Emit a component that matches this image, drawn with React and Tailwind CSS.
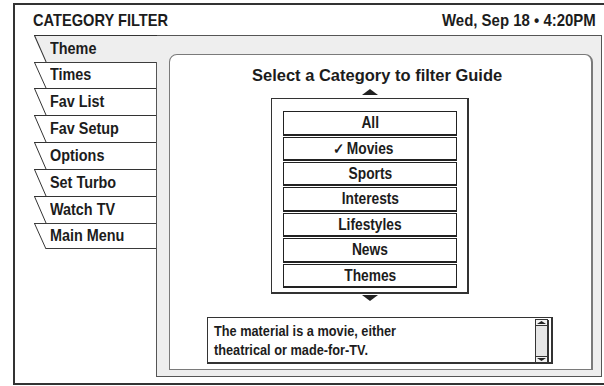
import React from "react";

const font = "font-['Liberation_Sans','Arial',sans-serif]";

const tabs = [
  { label: "Times", h: "h-[26px]" },
  { label: "Fav List", h: "h-[27px]" },
  { label: "Fav Setup", h: "h-[27px]" },
  { label: "Options", h: "h-[27px]" },
  { label: "Set Turbo", h: "h-[27px]" },
  { label: "Watch TV", h: "h-[27px]" },
  { label: "Main Menu", h: "h-[26px]", last: true },
];

const categories = [
  { label: "All", h: "h-[25px]" },
  { label: "Movies", h: "h-[24px]", checked: true },
  { label: "Sports", h: "h-[24px]" },
  { label: "Interests", h: "h-[25px]" },
  { label: "Lifestyles", h: "h-[24px]" },
  { label: "News", h: "h-[25px]" },
  { label: "Themes", h: "h-[24px]" },
];

function Tab({ label, h, last, selected }) {
  return (
    <div className={`relative flex items-center pl-[16px] ${h} ${selected ? "w-[123px]" : "w-[122px]"}`}>
      <svg className="absolute inset-0 h-full w-full" preserveAspectRatio="none" viewBox="0 0 122 27">
        {selected ? (
          <polygon points="0.5,0.5 123,0.5 123,27 12,27" fill="#eeeeee" />
        ) : null}
        <line x1="0" y1="0.5" x2="123" y2="0.5" stroke="#333" strokeWidth="1" />
        <line x1="0.5" y1="0.5" x2="12" y2="27" stroke="#333" strokeWidth="1" />
        {last ? <line x1="12" y1="26.5" x2="122" y2="26.5" stroke="#333" strokeWidth="1" /> : null}
      </svg>
      <span className="relative inline-block origin-left scale-x-[0.9] whitespace-nowrap text-[16px] font-bold leading-none text-[#1c1c1c]">
        {label}
      </span>
    </div>
  );
}

function Arrow({ up }) {
  return (
    <svg width="16" height="6" viewBox="0 0 16 6">
      <polygon points={up ? "0,6 8,0 16,6" : "0,0 8,6 16,0"} fill="#222" />
    </svg>
  );
}

function ScrollBar() {
  return (
    <svg width="14" height="44" viewBox="0 0 14 44" className="mr-[2px] mt-[1px]">
      <rect x="0.5" y="0.5" width="12" height="43" fill="#f2f2f2" stroke="#333" />
      <line x1="13.5" y1="1" x2="13.5" y2="44" stroke="#333" />
      <polygon points="2,5 6.5,2 11,5" fill="#222" />
      <line x1="1" y1="6.5" x2="12" y2="6.5" stroke="#333" />
      <rect x="1" y="7" width="11" height="30" fill="#e6e6e6" />
      <line x1="1" y1="37.5" x2="12" y2="37.5" stroke="#333" />
      <polygon points="2,39 6.5,42 11,39" fill="#222" />
    </svg>
  );
}

export default function App() {
  return (
    <div className={`relative h-[386px] w-[604px] overflow-hidden bg-white ${font} text-[#1c1c1c]`}>
      <div className="ml-[13px] mt-[3px] flex h-[382px] w-[600px] flex-col border-b-2 border-l-2 border-t-2 border-[#333]">
        <header className="flex h-[30px] items-center justify-between pl-[18px] pr-[17px]">
          <p className="inline-block origin-left scale-x-[0.86] whitespace-nowrap text-[17px] font-bold leading-none">
            CATEGORY FILTER
          </p>
          <p className="inline-block origin-right scale-x-[0.88] whitespace-nowrap text-[17px] font-bold leading-none">
            Wed, Sep 18 • 4:20PM
          </p>
        </header>

        <div className="flex pl-[19px]">
          <div className="relative z-10 flex w-[122px] flex-col">
            <Tab label="Theme" h="h-[27px]" selected />
            {tabs.map((tab) => (
              <Tab key={tab.label} {...tab} />
            ))}
          </div>

          <div className="h-[342px] w-[446px] border border-[#555] bg-[#eeeeee] pb-[5px] pl-[12px] pr-[8px] pt-[18px]">
            <div className="flex h-[316px] flex-col rounded-t-[8px] border border-r-2 border-[#7a7a7a] bg-white">
              <h1 className="origin-center scale-x-[0.97] pr-[7px] pt-[11px] text-center text-[17px] font-bold leading-[20px]">
                Select a Category to filter Guide
              </h1>

              <div className="ml-[101px] flex w-[198px] flex-col items-center">
                <div className="mt-[3px]">
                  <Arrow up />
                </div>
                <div className="mt-[3px] flex w-[198px] flex-col gap-px border border-b-2 border-r-2 border-[#333] pb-[4px] pl-[11px] pt-[12px]">
                  {categories.map((c) => (
                    <div
                      key={c.label}
                      className={`relative flex w-[174px] items-center justify-center border border-b-2 border-[#222] ${c.h}`}
                    >
                      {c.checked ? (
                        <span className="absolute left-[48px] inline-block scale-x-[0.9] text-[15px] font-bold leading-none">
                          ✓
                        </span>
                      ) : null}
                      <span className="inline-block scale-x-[0.86] whitespace-nowrap text-[16px] font-bold leading-none">
                        {c.label}
                      </span>
                    </div>
                  ))}
                </div>
                <div className="mt-[1px]">
                  <Arrow />
                </div>
              </div>

              <div className="ml-[37px] mt-[16px] flex h-[47px] w-[346px] border border-b-2 border-r-2 border-[#333]">
                <p className="flex-1 origin-left scale-x-[0.85] whitespace-nowrap pl-[7px] pt-[3px] text-[15px] font-bold leading-[19px]">
                  The material is a movie, either
                  <br />
                  theatrical or made-for-TV.
                </p>
                <ScrollBar />
              </div>
            </div>
          </div>
        </div>
      </div>
    </div>
  );
}
